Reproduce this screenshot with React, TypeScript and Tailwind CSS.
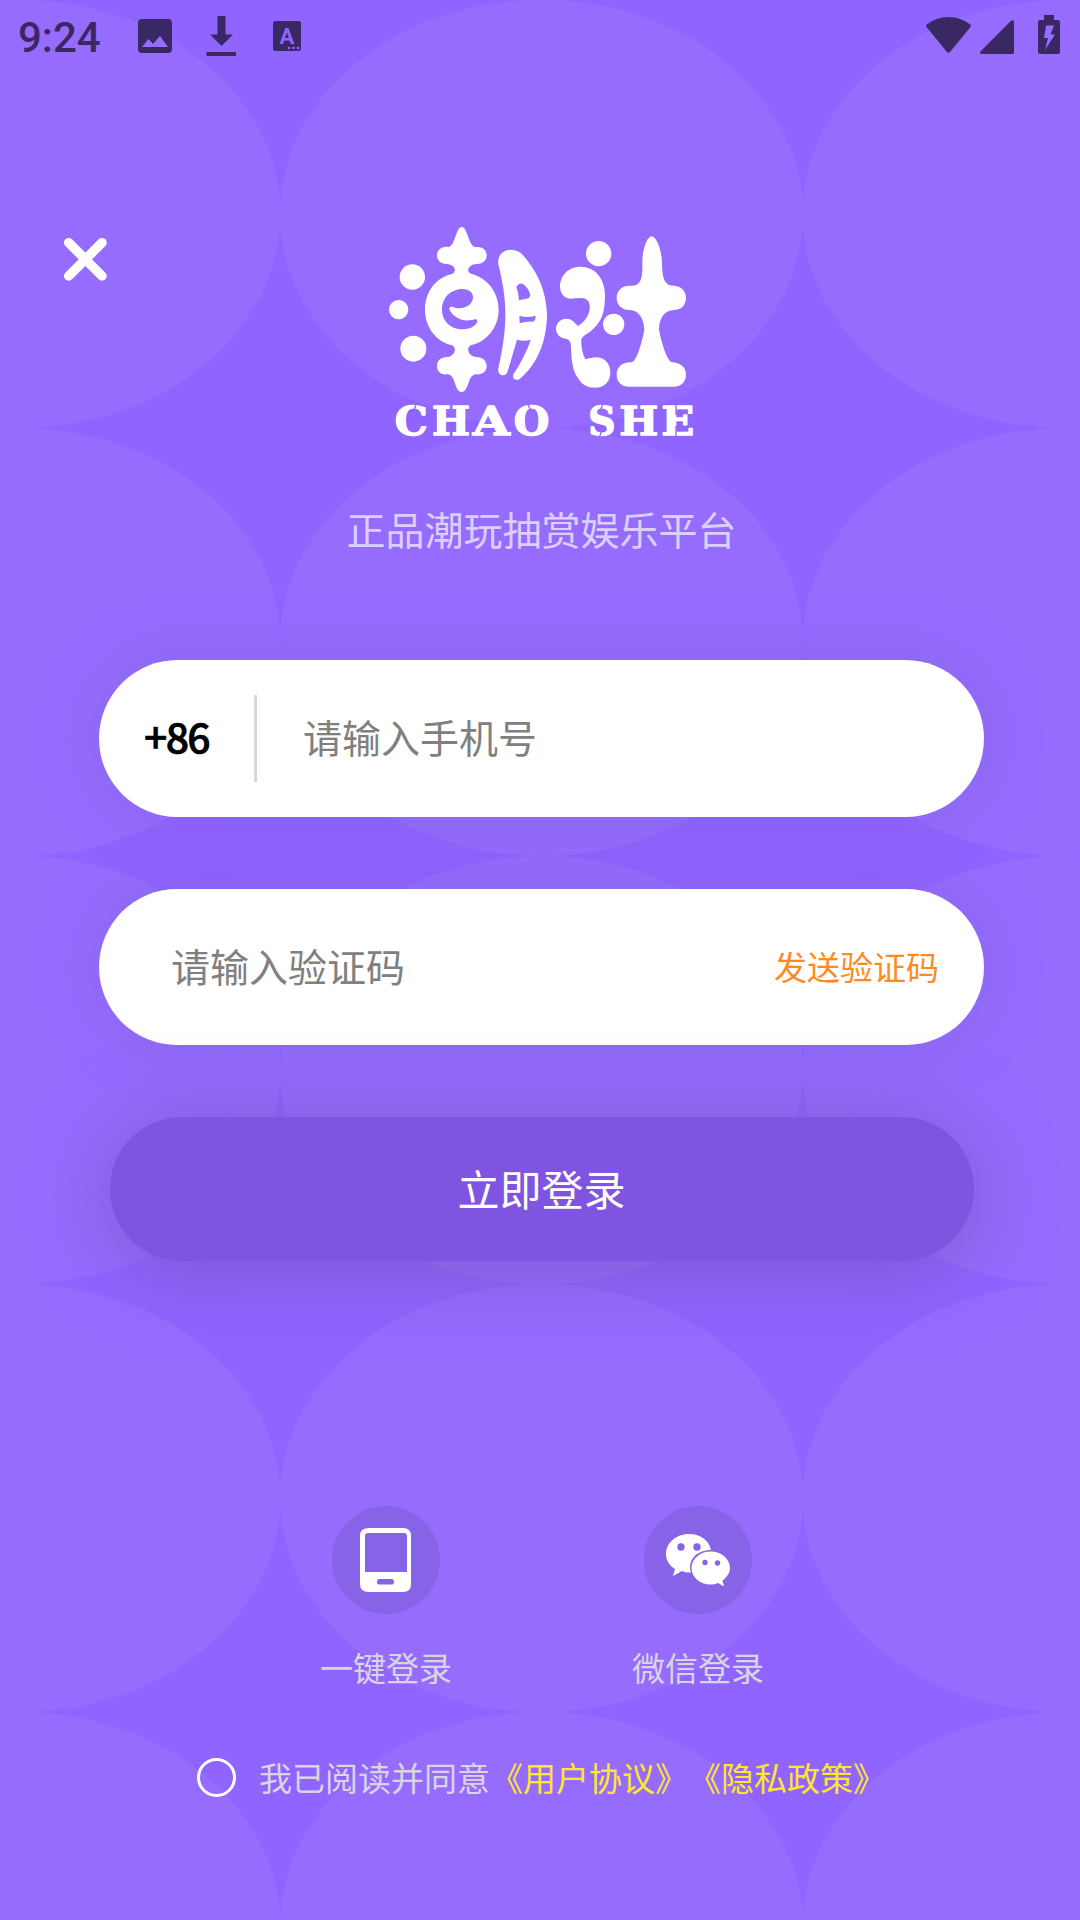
import type { ReactNode } from "react";

const COLUMNS = [19, 541.5, 1064];
const ROWS = [214, 642, 1070, 1498, 1926];

// Wordmark letters: glyph, left edge, width
const WORDMARK: [string, number, number][] = [
  ["C", 74, 99],
  ["H", 186, 114],
  ["A", 308, 111],
  ["O", 431, 107],
  ["S", 655, 82],
  ["H", 748, 117],
  ["E", 874, 99],
];

const FONT = "font-['Noto_Sans_CJK_SC',sans-serif]";

export default function App() {
  return (
    <div className={`relative isolate flex h-[1920px] w-[1080px] flex-col overflow-hidden bg-[#9064ff] ${FONT}`}>
      <Backdrop />
      <StatusBar />

      <header className="mt-[143px] flex items-start pl-[63px]">
        <button aria-label="关闭" className="mt-[22px]">
          <svg className="h-11 w-11" viewBox="0 0 44 44" stroke="#fff" strokeWidth="9.500" strokeLinecap="round">
            <path d="M5.7 5.7 39 39M39 5.7 5.7 39" />
          </svg>
        </button>
        <Logo />
      </header>

      <p className="mt-[44px] pl-[3px] text-center text-[39px] leading-[58px] text-[#dacfff]">正品潮玩抽赏娱乐平台</p>

      {/* Form */}
      <form className="mt-[103px] flex flex-col items-center">
        <Field className="h-[157px]">
          <span className="w-[111px] pb-[6px] pl-[45px] text-[41px] font-medium tracking-[-1.700px] text-black [-webkit-text-stroke:0.7px_#000]">
            +86
          </span>
          <span className="mb-[1px] ml-[44px] h-[87px] w-[3px] bg-[#d8d8d8]" />
          <span className="ml-[46px] pb-[4px] text-[39px] text-[#808080]">请输入手机号</span>
        </Field>
        <Field className="mt-[72px] h-[156px]">
          <span className="pb-[3px] pl-[72px] text-[39px] text-[#808080]">请输入验证码</span>
          <span className="mr-[45px] ml-auto text-[33px] text-[#ff8a1f]">发送验证码</span>
        </Field>
        <button
          type="button"
          className="mt-[72px] ml-1 h-36 w-[864px] rounded-full bg-[#7e54e0] pr-[1px] pb-[3px] text-[42px] text-white shadow-[0_8px_80px_rgba(102,80,170,0.6)]"
        >
          立即登录
        </button>
      </form>

      {/* Other ways to sign in */}
      <div className="mt-[245px] flex justify-center gap-[180px] pl-1">
        <LoginOption label="一键登录">
          <svg className="h-[66px] w-[54px]" viewBox="0 0 54 66">
            <path
              fill="#fff"
              fillRule="evenodd"
              d="M10 1H44Q52 1 52 9V57Q52 65 44 65H10Q1 65 1 57V9Q1 1 10 1ZM9 6Q6 6 6 9V45H48V9Q48 6 45 6ZM20 52Q18 52 18 54.700Q18 57.500 20 57.500H33Q35 57.500 35 54.700Q35 52 33 52Z"
            />
          </svg>
        </LoginOption>
        <LoginOption label="微信登录">
          <svg className="h-[54px] w-[66px]" viewBox="0 0 66 54">
            <path
              fill="#fff"
              d="M24 1C11 1 1 10 1 21C1 28 5 33 10 36L8 43L17 38Q21 40 26 39.500C22 27 32 17 46 17C44 7 35 1 24 1Z"
            />
            <path
              fill="#fff"
              d="M45.500 18.500C35 18.500 26.500 26 26.500 35C26.500 44 35 51.500 45.500 51.500Q49.500 51.500 53 50L59 53.500L57.500 47.500C62 44 65 40 65 35C65 26 56.500 18.500 45.500 18.500Z"
            />
            <g fill="#8763e8">
              <circle cx="16" cy="14" r="3.700" />
              <circle cx="32" cy="14" r="3.700" />
              <circle cx="40" cy="29.500" r="2.700" />
              <circle cx="52.500" cy="30" r="2.700" />
            </g>
          </svg>
        </LoginOption>
      </div>

      <label className="mt-[60px] flex items-center pl-[197px] text-[33px] leading-[50px] whitespace-nowrap text-[#d8d5de] [text-spacing-trim:space-all]">
        <span className="mr-[23px] h-[39px] w-[39px] rounded-full border-[3px] border-white" />
        我已阅读并同意<span className="text-[#ffe629]">《用户协议》《隐私政策》</span>
      </label>
    </div>
  );
}

function Backdrop() {
  return (
    <svg className="absolute inset-0 -z-10 h-full w-full" viewBox="0 0 1080 1920" fill="#966cff">
      {ROWS.map((cy) => COLUMNS.map((cx) => <ellipse key={`${cx}-${cy}`} cx={cx} cy={cy} rx="261.5" ry="214" />))}
    </svg>
  );
}

function Field({ className = "", children }: { className?: string; children: ReactNode }) {
  return (
    <div
      className={`ml-[3px] flex w-[885px] items-center rounded-full bg-white shadow-[0_0_66px_rgba(102,80,170,0.22)] ${className}`}
    >
      {children}
    </div>
  );
}

function LoginOption({ label, children }: { label: string; children: ReactNode }) {
  return (
    <div className="flex w-[132px] flex-col items-center">
      <div className="flex h-[108px] w-[108px] items-center justify-center rounded-full bg-[#8763e8]">{children}</div>
      <span className="mt-[28px] text-[33px] leading-[50px] whitespace-nowrap text-[#d8d5de]">{label}</span>
    </div>
  );
}

function StatusBar() {
  return (
    <div className="flex h-[72px] items-start pt-[14px] pl-[18px] text-[#3a2865]">
      <span className="w-[120px] font-[Roboto,sans-serif] text-[42px] leading-[48px] font-medium">9:24</span>
      <svg className="mt-[5px] h-[34px] w-[34px]" viewBox="0 0 34 34" fill="currentColor">
        <path fillRule="evenodd" d="M4 0H30Q34 0 34 4V30Q34 34 30 34H4Q0 34 0 30V4Q0 0 4 0ZM4 28H30L22 17L15 25L10.500 20Z" />
      </svg>
      <svg className="mt-[2px] ml-[34px] h-10 w-[30px]" viewBox="0 0 30 40" fill="currentColor">
        <path d="M11.500 0H19.500V18.500H27L15.500 30L4 18.500H11.500ZM.500 36H30V40H.500Z" />
      </svg>
      <svg className="mt-[7px] ml-[37px] h-[30px] w-7" viewBox="0 0 28 30">
        <rect width="28" height="30" rx="2.500" fill="currentColor" />
        <text x="14" y="22.500" textAnchor="middle" fill="#9064ff" className="font-[Roboto,sans-serif] text-[22px] font-bold">
          A
        </text>
        <g fill="#9064ff">
          <circle cx="16" cy="27" r="1.300" />
          <circle cx="20.500" cy="27" r="1.300" />
          <circle cx="25" cy="27" r="1.300" />
        </g>
      </svg>
      <svg className="mt-[3px] ml-[625px] h-9 w-[45px]" viewBox="0 0 45 36" fill="currentColor">
        <path d="M.700 7.500Q10 0 22.500 0T44.300 7.500Q45.500 8.500 44.500 10L24 35Q22.500 36.500 21 35L.500 10Q-.500 8.500 .700 7.500Z" />
      </svg>
      <svg className="mt-[6px] ml-[9px] h-[34px] w-[34px]" viewBox="0 0 34 34" fill="currentColor">
        <path d="M31 .800Q34-1 34 2V32.500Q34 34 32.500 34H2Q-1 34 .700 31.300Z" />
      </svg>
      <svg className="mt-[1px] ml-6 h-[39px] w-[22px]" viewBox="0 0 22 39" fill="currentColor">
        <path fillRule="evenodd" d="M6 0H16V5H20Q22 5 22 7V37Q22 39 20 39H2Q0 39 0 37V7Q0 5 2 5H6ZM8 10.500L6 23H10L7 35L17 19.500H12.500L16 10.500Z" />
      </svg>
    </div>
  );
}

function Logo() {
  return (
    <svg className="ml-[263px] h-[240px] w-[340px]" viewBox="0 0 1020 720" fill="#fff" role="img" aria-label="潮社 CHAO SHE">
      <circle cx="127" cy="186" r="38" />
      <circle cx="86" cy="284" r="29" />
      <circle cx="130" cy="401" r="39" />
      <path d="M275 36C258 36 255 95 235 96C215 93 201 105 201 121C201 138 214 148 231 147C253 149 263 167 246 177C199 187 165 230 165 284C165 337 199 380 246 391C263 400 253 422 235 426C215 424 201 436 201 452C201 470 214 480 231 478C258 476 252 531 275 531C298 531 292 476 320 478C337 480 350 469 350 453C350 437 337 425 316 426C298 424 286 401 302 391C351 380 386 336 386 284C386 231 351 187 302 176C286 168 297 147 320 147C337 148 350 138 350 121C350 105 337 94 316 96C296 95 293 36 275 36Z" />
      <path
        fill="#966cff"
        d="M277 222C243 222 216 248 216 284C216 319 244 344 280 343C302 343 322 329 322 318C322 309 313 313 300 316C270 320 241 297 238 281C238 273 249 275 254 278C276 285 309 273 309 247C309 231 295 222 277 222Z"
      />
      <path
        fillRule="evenodd"
        d="M421 104C397 105 382 123 385 148C409 245 417 320 385 460C383 474 391 482 400 481C409 480 412 474 415 463L441 374Q460 380 482 374C473 404 449 452 430 478C425 491 437 499 449 492C500 450 530 382 531 300C529 224 499 164 455 116Q440 104 421 104ZM439 217Q447 201 460 208Q475 219 481 239Q480 250 469 251L447 256Q446 233 439 217ZM448 302Q473 310 496 302Q499 314 490 320Q471 318 449 325Z"
      />
      <circle cx="686" cy="116" r="38" />
      <circle cx="731" cy="328" r="32" />
      <path d="M631 155C595 155 570 182 570 216C571 238 585 251 603 251Q625 248 640 250C670 253 666 309 624 333C615 326 609 311 587 311C570 312 558 325 558 342C559 359 570 369 587 371Q602 374 603 393C604 434 606 464 625 491C636 509 654 518 675 518C703 518 721 499 721 473C721 445 704 427 678 427Q661 428 646 433Q632 405 634 372C640 358 665 355 687 321C701 302 705 270 705 239C704 190 675 155 631 155Z" />
      <path d="M845 64C831 64 817 105 817 139C818 177 817 212 788 212H777C755 212 740 228 740 248C740 270 757 285 778 285C807 285 822 313 823 344C818 371 804 430 786 442C756 440 740 457 740 479C740 501 756 515 777 515H912C933 515 948 500 948 479C948 457 931 442 905 442C887 431 872 371 867 344C867 310 884 285 912 285C934 285 948 270 948 249C948 227 933 212 910 212C881 212 877 183 876 147C876 105 859 64 845 64Z" />
      <g className="font-['DejaVu_Serif',serif] text-[120px] font-bold" stroke="#fff" strokeWidth="4" strokeLinejoin="round">
        {WORDMARK.map(([letter, x, width]) => (
          <text key={x} x={x} y="661" textLength={width} lengthAdjust="spacingAndGlyphs">
            {letter}
          </text>
        ))}
      </g>
      {/* Stencil cuts through the wordmark */}
      <path stroke="#9366ff" strokeWidth="4" d="M139 566 129 594M474 568 484 592M699 566 689 592M697 640 688 668M918 566V600M918 632V668" />
    </svg>
  );
}
